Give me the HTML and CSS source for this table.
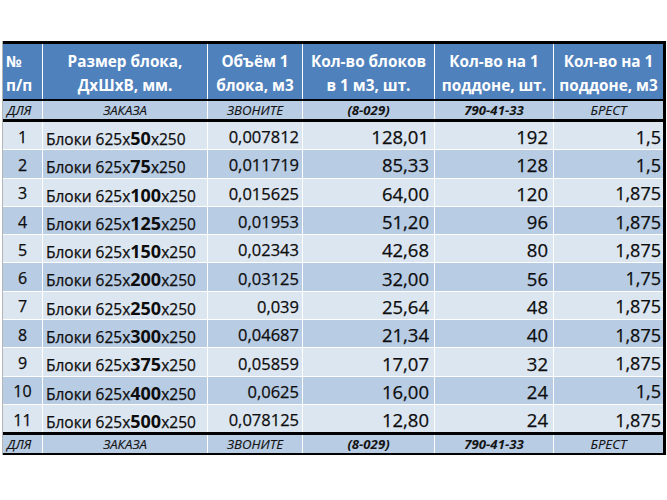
FILE: index.html
```html
<!DOCTYPE html>
<html lang="ru">
<head>
<meta charset="utf-8">
<title>Блоки</title>
<link rel="stylesheet" href="styles.css">
</head>
<body>
<div class="sheet">
  <div class="grid head">
    <div class="hc left">№<br>п/п</div>
    <div class="hc">Размер блока,<br>ДхШхВ, мм.</div>
    <div class="hc">Объём 1<br>блока, м3</div>
    <div class="hc">Кол-во блоков<br>в 1 м3, шт.</div>
    <div class="hc">Кол-во на 1<br>поддоне, шт.</div>
    <div class="hc">Кол-во на 1<br>поддоне, м3</div>
  </div>
  <div class="grid note top">
    <div class="nc left">ДЛЯ</div>
    <div class="nc">ЗАКАЗА</div>
    <div class="nc">ЗВОНИТЕ</div>
    <div class="nc strong">(8-029)</div>
    <div class="nc strong">790-41-33</div>
    <div class="nc">БРЕСТ</div>
  </div>
  <div class="grid body">
    <div class="c n odd">1</div><div class="c name odd">Блоки 625x<b>50</b>x250</div><div class="c v3 odd">0,007812</div><div class="c v4 odd">128,01</div><div class="c v5 odd">192</div><div class="c v6 odd">1,5</div>
    <div class="c n">2</div><div class="c name">Блоки 625x<b>75</b>x250</div><div class="c v3">0,011719</div><div class="c v4">85,33</div><div class="c v5">128</div><div class="c v6">1,5</div>
    <div class="c n odd">3</div><div class="c name odd">Блоки 625x<b>100</b>x250</div><div class="c v3 odd">0,015625</div><div class="c v4 odd">64,00</div><div class="c v5 odd">120</div><div class="c v6 odd">1,875</div>
    <div class="c n">4</div><div class="c name">Блоки 625x<b>125</b>x250</div><div class="c v3">0,01953</div><div class="c v4">51,20</div><div class="c v5">96</div><div class="c v6">1,875</div>
    <div class="c n odd">5</div><div class="c name odd">Блоки 625x<b>150</b>x250</div><div class="c v3 odd">0,02343</div><div class="c v4 odd">42,68</div><div class="c v5 odd">80</div><div class="c v6 odd">1,875</div>
    <div class="c n">6</div><div class="c name">Блоки 625x<b>200</b>x250</div><div class="c v3">0,03125</div><div class="c v4">32,00</div><div class="c v5">56</div><div class="c v6">1,75</div>
    <div class="c n odd">7</div><div class="c name odd">Блоки 625x<b>250</b>x250</div><div class="c v3 odd">0,039</div><div class="c v4 odd">25,64</div><div class="c v5 odd">48</div><div class="c v6 odd">1,875</div>
    <div class="c n">8</div><div class="c name">Блоки 625x<b>300</b>x250</div><div class="c v3">0,04687</div><div class="c v4">21,34</div><div class="c v5">40</div><div class="c v6">1,875</div>
    <div class="c n odd">9</div><div class="c name odd">Блоки 625x<b>375</b>x250</div><div class="c v3 odd">0,05859</div><div class="c v4 odd">17,07</div><div class="c v5 odd">32</div><div class="c v6 odd">1,875</div>
    <div class="c n">10</div><div class="c name">Блоки 625x<b>400</b>x250</div><div class="c v3">0,0625</div><div class="c v4">16,00</div><div class="c v5">24</div><div class="c v6">1,5</div>
    <div class="c n odd">11</div><div class="c name odd">Блоки 625x<b>500</b>x250</div><div class="c v3 odd">0,078125</div><div class="c v4 odd">12,80</div><div class="c v5 odd">24</div><div class="c v6 odd">1,875</div>
  </div>
  <div class="grid note bottom">
    <div class="nc left">ДЛЯ</div>
    <div class="nc">ЗАКАЗА</div>
    <div class="nc">ЗВОНИТЕ</div>
    <div class="nc strong">(8-029)</div>
    <div class="nc strong">790-41-33</div>
    <div class="nc">БРЕСТ</div>
  </div>
</div>
</body>
</html>
```

FILE: styles.css
```css
html, body {
  margin: 0;
  padding: 0;
  background: #ffffff;
}
body {
  font-family: "Open Sans", "Noto Sans", sans-serif;
  color: #0d0d0d;
}
.sheet {
  margin: 41px 0 0 2px;
  width: 660px;
  border-left: 1px solid #b5b5b5;
  border-right: 3px solid #000;
}
.grid {
  display: grid;
  grid-template-columns: 39px 164px 94px 131px 118px 109px;
  column-gap: 1px;
  background: #ffffff;
}
.head {
  border-top: 3px solid #000;
  border-bottom: 2px solid #000;
  height: 55px;
}
.hc {
  background: #4f81bd;
  color: #ffffff;
  font-weight: 700;
  font-size: 15.3px;
  line-height: 24px;
  text-align: center;
  display: flex;
  align-items: center;
  justify-content: center;
  padding-top: 3px;
  white-space: nowrap;
}
.hc.left {
  justify-content: flex-start;
  text-align: left;
  padding-left: 3px;
}
.note {
  height: 18px;
}
.note.top {
  border-bottom: 3px solid #000;
}
.note.bottom {
  border-top: 3px solid #000;
  border-bottom: 2px solid #000;
}
.nc {
  background: #b8cce4;
  font-style: italic;
  font-size: 13.2px;
  line-height: 18px;
  text-align: center;
  color: #141414;
  white-space: nowrap;
  -webkit-text-stroke: 0.15px #141414;
}
.nc.left {
  text-align: left;
  padding-left: 4px;
}
.nc.strong {
  font-weight: 700;
  -webkit-text-stroke: 0;
}
.body {
  grid-auto-rows: 27.3px;
  row-gap: 1px;
}
.c {
  background: #b8cce4;
  display: flex;
  align-items: center;
  padding-top: 2px;
  box-sizing: border-box;
  white-space: nowrap;
  -webkit-text-stroke: 0.25px #0d0d0d;
}
.c.odd {
  background: #dce6f1;
}
.n {
  justify-content: center;
  font-size: 16px;
}
.name {
  font-size: 15.5px;
  padding-left: 3px;
  align-items: baseline;
  padding-top: 4px;
}
.name b {
  font-size: 18px;
  font-weight: 700;
  -webkit-text-stroke: 0;
}
.v3 {
  justify-content: flex-end;
  font-size: 16.5px;
  padding-right: 3px;
}
.v4 {
  justify-content: flex-end;
  font-size: 18.5px;
  padding-right: 5px;
}
.v5 {
  justify-content: flex-end;
  font-size: 18.5px;
  padding-right: 5px;
}
.v6 {
  justify-content: flex-end;
  font-size: 18px;
  padding-right: 2px;
}
```
